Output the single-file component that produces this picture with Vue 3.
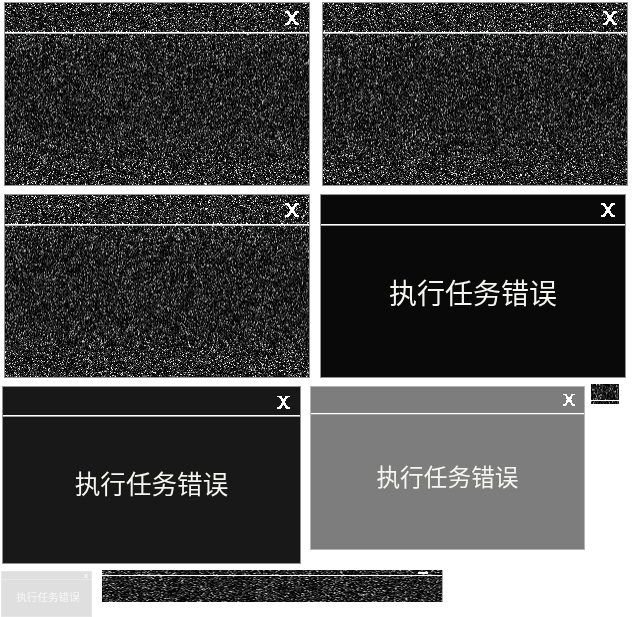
<script setup>
import { onMounted, ref } from 'vue'

const rows = [
  [
    { id: 'static-a', kind: 'noise', seed: 11, w: 306, h: 184, bar: 30 },
    { id: 'static-b', kind: 'noise', seed: 29, w: 306, h: 184, bar: 30 }
  ],
  [
    { id: 'static-c', kind: 'noise', seed: 47, w: 306, h: 184, bar: 30 },
    { id: 'black', kind: 'message', text: '执行任务错误' }
  ],
  [
    { id: 'charcoal', kind: 'message', text: '执行任务错误' },
    { id: 'grey', kind: 'message', text: '执行任务错误' },
    { id: 'thumb', kind: 'noise', seed: 71, w: 28, h: 20, bar: 16, bare: true }
  ],
  [
    { id: 'faded', kind: 'message', text: '执行任务错误' },
    { id: 'strip', kind: 'noise', seed: 83, w: 341, h: 32, bar: 5, bare: true, wide: true }
  ]
]

const root = ref(null)

function random(seed) {
  let s = seed
  return () => {
    s = (s + 0x6d2b79f5) | 0
    let t = Math.imul(s ^ (s >>> 15), 1 | s)
    t = (t + Math.imul(t ^ (t >>> 7), 61 | t)) ^ t
    return ((t ^ (t >>> 14)) >>> 0) / 4294967296
  }
}

// Static: sharp specks near the top and bottom edges, dim streaks in the middle.
function paint(canvas, p) {
  const next = random(p.seed)
  const ctx = canvas.getContext('2d')
  const img = ctx.createImageData(p.w, p.h)
  const raw = new Float32Array(p.w * p.h)
  for (let i = 0; i < raw.length; i++) {
    const r = next()
    raw[i] = r > 0.915 ? 150 + next() * 105 : r > 0.45 ? next() * 105 : next() * 12
  }
  for (let y = 0; y < p.h; y++) {
    const centre = 1 - Math.abs(y / p.h - 0.5) * 2
    const mix = p.bare ? 0.4 : Math.min(0.48, Math.max(0, centre - 0.15) * 0.9)
    const gain = p.bare ? 0.9 : 1.08 - mix * 0.55
    for (let x = 0; x < p.w; x++) {
      const i = y * p.w + x
      const j = p.wide ? (x ? i - 1 : i) : y ? i - p.w : i
      const v = (raw[i] * (1 - mix) + raw[j] * mix) * gain
      img.data[i * 4] = v
      img.data[i * 4 + 1] = v
      img.data[i * 4 + 2] = v
      img.data[i * 4 + 3] = 255
    }
  }
  ctx.putImageData(img, 0, 0)
  ctx.fillStyle = '#fff'
  ctx.fillRect(0, p.bar, p.w, 1)
  if (!p.bare) {
    ctx.fillStyle = '#aab0aa'
    ctx.fillRect(0, p.bar + 1, p.w, 1)
    ctx.fillStyle = '#fff'
    for (let x = 0; x < p.w; x++) {
      if (next() > 0.8) ctx.fillRect(x, p.bar - 1 + Math.round(next()) * 2, 1, 1)
    }
    ctx.strokeStyle = '#929292'
    ctx.strokeRect(0.5, 0.5, p.w - 1, p.h - 1)
  }
  if (p.wide) {
    ctx.fillRect(316, 2, 10, 2)
    ctx.fillStyle = '#aaa'
    ctx.fillRect(p.w - 1, 0, 1, p.h)
  }
}

onMounted(() => {
  for (const p of rows.flat()) {
    if (p.kind === 'noise') paint(root.value.querySelector(`.${p.id} canvas`), p)
  }
})
</script>

<template>
  <main ref="root" class="sheet">
    <div v-for="(row, n) in rows" :key="n" class="row" :class="`row-${n + 1}`">
      <section v-for="p in row" :key="p.id" class="panel" :class="[p.id, p.kind]">
        <canvas v-if="p.kind === 'noise'" :width="p.w" :height="p.h"></canvas>
        <header v-if="!p.bare" class="bar">
          <svg class="close" viewBox="0 0 14 14" shape-rendering="crispEdges">
            <path d="M0 0H4V1H5V3H6V4H8V3H9V1H10V0H14V2H12V3H11V4H10V6H9V8H10V10H11V11H12V12H14V14H10V13H9V11H8V10H6V11H5V13H4V14H0V12H2V11H3V10H4V8H5V6H4V4H3V3H2V2H0Z" />
          </svg>
        </header>
        <div v-if="p.text" class="body"><span>{{ p.text }}</span></div>
      </section>
    </div>
  </main>
</template>

<style>
body {
  background: #fff;
}
</style>

<style scoped>
.sheet {
  box-sizing: border-box;
  width: 632px;
  height: 617px;
  overflow: hidden;
  padding-top: 2px;
  background: #fff;
}
.row {
  display: flex;
  align-items: flex-start;
}
.row-1 {
  height: 192px;
  padding-left: 4px;
  gap: 12px;
}
.row-2 {
  height: 192px;
  padding-left: 4px;
  gap: 10px;
}
.row-3 {
  height: 184px;
  padding-left: 2px;
}
.row-4 {
  padding-left: 1px;
  gap: 10px;
}
.panel {
  box-sizing: border-box;
  display: flex;
  flex-direction: column;
  flex: none;
}
.noise {
  display: grid;
}
.noise > * {
  grid-area: 1 / 1;
}
canvas {
  display: block;
}
.bar {
  box-sizing: border-box;
  display: flex;
  justify-content: flex-end;
  flex: none;
}
.noise .bar {
  padding: 9px 11px 0 0;
  height: 30px;
}
.close {
  display: block;
  width: 14px;
  height: 14px;
  fill: #fff;
}
.message {
  border: 1px solid #929292;
}
.message .bar {
  border-bottom: 1px solid #fff;
  box-shadow: 0 1px 0 #a09ca0;
}
.body {
  flex: 1;
  display: flex;
  justify-content: center;
  color: #f5f5f2;
  font-family: "Noto Sans CJK SC", sans-serif;
  font-weight: 400;
  line-height: 1;
  white-space: nowrap;
}
.black {
  width: 306px;
  height: 184px;
  background: #090909;
}
.black .bar {
  height: 30px;
  padding: 8px 10px 0 0;
}
.black .body {
  padding-top: 53px;
  font-size: 28px;
}
.charcoal {
  width: 299px;
  height: 178px;
  background: #181818;
}
.charcoal .bar {
  height: 29px;
  padding: 8px 10px 0 0;
}
.charcoal .close {
  width: 13px;
}
.charcoal .body {
  padding-top: 54px;
  font-size: 25.6px;
}
.grey {
  width: 275px;
  height: 164px;
  margin-left: 9px;
  background: #7d7d7d;
  border-color: #b4b4b4;
}
.grey .bar {
  height: 27px;
  padding: 6px 9px 0 0;
}
.grey .close {
  width: 12px;
  height: 13px;
}
.grey .body {
  padding-top: 51px;
  font-size: 23.7px;
}
.thumb {
  margin-left: 6px;
  margin-top: -2px;
}
.faded {
  width: 91px;
  height: 46px;
  margin-top: 1px;
  background: #dfdfdf;
  border-color: #e5e5e5;
}
.faded .bar {
  height: 8px;
  padding: 2px 3px 0 0;
  border-bottom: 1px solid #e8e8e8;
  box-shadow: none;
}
.faded .close {
  width: 4px;
  height: 4px;
  shape-rendering: auto;
}
.faded .body {
  padding: 12px 0 0 3px;
  font-size: 10.6px;
  color: #f7f7f7;
}
</style>
